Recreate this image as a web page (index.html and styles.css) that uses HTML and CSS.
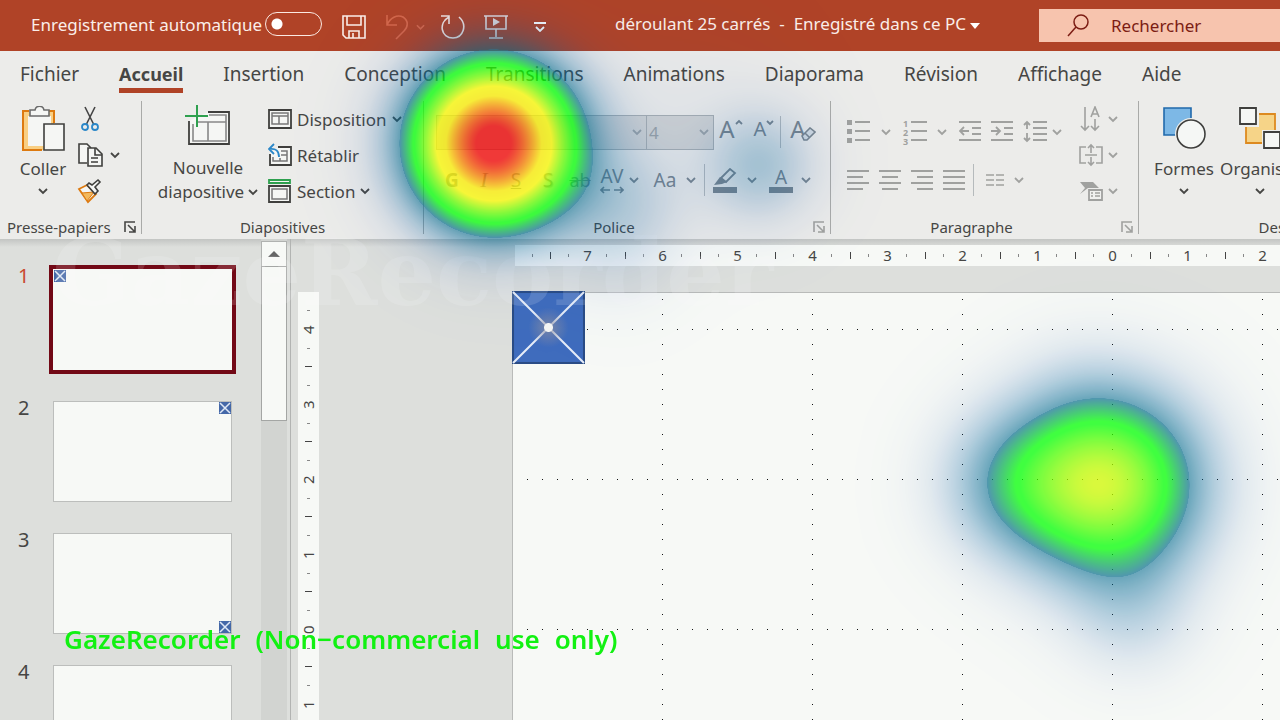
FILE: index.html
```html
<!DOCTYPE html>
<html lang="fr">
<head>
<meta charset="utf-8">
<title>déroulant 25 carrés</title>
<link rel="stylesheet" href="styles.css">
</head>
<body>
<svg class="defs" aria-hidden="true">
  <symbol id="chev" viewBox="0 0 10 8"><path d="M1 2l4 4 4-4" fill="none" stroke="currentColor" stroke-width="1.8"/></symbol>
  <symbol id="launch" viewBox="0 0 14 14"><path d="M2 12V2h10M5 5l7 7M12 6v6H6" fill="none" stroke="currentColor" stroke-width="1.6"/></symbol>
  <symbol id="cross" viewBox="0 0 72 72"><rect x="1" y="1" width="70" height="70" fill="#3f6cbd" stroke="#2a4c85" stroke-width="2"/><path d="M1 1l70 70M71 1L1 71" stroke="#e6edf8" stroke-width="2"/></symbol>
  <symbol id="minicross" viewBox="0 0 12 12"><rect width="12" height="12" fill="#4468a8"/><path d="M1 1l10 10M11 1L1 11" stroke="#dfe8f6" stroke-width="1.5"/></symbol>
</svg>
<div class="app">
  <header class="titlebar">
    <label class="autosave" for="autosave">Enregistrement automatique</label>
    <input class="toggle" id="autosave" type="checkbox">
    <button class="tool save" aria-label="Enregistrer"><svg width="26" height="26" viewBox="0 0 26 26"><path d="M2 2h22v22H5l-3-3zM6 2v9h14V2M8 24v-7h10v7M12 19v5" fill="none" stroke="#fbeee9" stroke-width="1.6"/></svg></button>
    <button class="tool undo" aria-label="Annuler"><svg width="24" height="26" viewBox="0 0 24 26"><path d="M2 1v10h10M2 11C5 4 12 0 18 3c6 4 5 10 1 14l-8 8" fill="none" stroke="currentColor" stroke-width="1.6"/></svg><svg width="9" height="8"><use href="#chev"/></svg></button>
    <button class="tool redo" aria-label="Rétablir"><svg width="26" height="26" viewBox="0 0 26 26"><path d="M19 3c9 8 4 21-6 21C1 24-2 9 9 3M1 2h8v8" fill="none" stroke="#f7e5de" stroke-width="1.6"/></svg></button>
    <button class="tool show" aria-label="Diaporama"><svg width="24" height="26" viewBox="0 0 24 26"><path d="M0 2h24M2 2v13h20V2M12 15v8M5 24h14" fill="none" stroke="#e9dcda" stroke-width="1.6"/><path d="M9 4l7 4-7 4z" fill="#e9dcda"/></svg></button>
    <button class="tool more" aria-label="Personnaliser"><svg width="12" height="10" viewBox="0 0 12 10"><path d="M0 1h12M2 5l4 4 4-4" fill="none" stroke="#fff" stroke-width="1.8"/></svg></button>
    <h1 class="doc">déroulant 25 carrés&nbsp; -&nbsp; Enregistré dans ce PC</h1>
    <svg class="doc-arrow" width="10" height="6"><path d="M0 0h10L5 6z" fill="#fff"/></svg>
    <label class="search"><svg width="22" height="24" viewBox="0 0 22 24"><circle cx="14" cy="8" r="7" fill="none" stroke="#7c1d14" stroke-width="1.5"/><path d="M9 13l-8 9" stroke="#7c1d14" stroke-width="1.5"/></svg><input type="text" placeholder="Rechercher" aria-label="Rechercher"></label>
  </header>

  <nav class="tabs">
    <a href="#">Fichier</a><a href="#" class="active">Accueil</a><a href="#">Insertion</a><a href="#">Conception</a><a href="#">Transitions</a><a href="#">Animations</a><a href="#">Diaporama</a><a href="#">Révision</a><a href="#">Affichage</a><a href="#">Aide</a>
  </nav>

  <section class="ribbon">
    <div class="group clipboard">
      <div class="body">
        <button class="big paste"><svg width="44" height="46" viewBox="0 0 44 46"><path d="M3 6h30v38H3z" fill="#f9cf83"/><path d="M7 10h23v30H7z" fill="#f5f6f4"/><path d="M8 5H2v39h19M27 5h6v12" fill="none" stroke="#dd7a10" stroke-width="2"/><path d="M9 10V4h5c1-5 8-5 9 0h5v6z" fill="#f5f6f4" stroke="#6b6b6b" stroke-width="1.6"/><path d="M23 18h20v26H23z" fill="#f5f6f4" stroke="#3f3f3d" stroke-width="1.6"/></svg><span>Coller</span><svg width="10" height="8"><use href="#chev"/></svg></button>
        <div class="stack">
          <button aria-label="Couper"><svg width="18" height="26" viewBox="0 0 18 26"><path d="M4 1l9 18M14 1L5 19" stroke="#444" stroke-width="1.6"/><circle cx="4" cy="21" r="3" fill="none" stroke="#2b87c8" stroke-width="1.8"/><circle cx="14" cy="21" r="3" fill="none" stroke="#2b87c8" stroke-width="1.8"/></svg></button>
          <button aria-label="Copier" class="copy"><svg width="26" height="26" viewBox="0 0 26 26"><path d="M10 21H2V2h8l4 4" fill="#f5f6f4" stroke="#3f3f3d" stroke-width="1.6"/><path d="M11 6h8l6 6v12H11z" fill="#f5f6f4" stroke="#3f3f3d" stroke-width="1.6"/><path d="M18 6v7h7M14 16h7M14 20h7" fill="none" stroke="#3f3f3d" stroke-width="1.6"/></svg><svg width="10" height="8"><use href="#chev"/></svg></button>
          <button aria-label="Reproduire la mise en forme"><svg width="26" height="26" viewBox="0 0 26 26"><path d="M2 11l8-4 9 9-8 8z" fill="#f5f6f4" stroke="#dd7a10" stroke-width="1.8"/><path d="M5 15l12-1-7 9z" fill="#f3b95e" stroke="#dd7a10"/><path d="M10 7l8 9 3-3-3-4 5-5-2-2-6 5-3-2z" fill="#f5f6f4" stroke="#3f3f3d" stroke-width="1.6"/></svg></button>
        </div>
      </div>
      <div class="foot"><span>Presse-papiers</span><button aria-label="Options presse-papiers"><svg width="14" height="14"><use href="#launch"/></svg></button></div>
    </div>

    <div class="group slides">
      <div class="body">
        <button class="big newslide"><svg width="46" height="44" viewBox="0 0 46 44"><path d="M4 17v23h40V8H23" fill="#f5f6f4"/><path d="M4 17v23h40V8H23" fill="none" stroke="#3f3f3d" stroke-width="1.8"/><path d="M8 20v17h33V11H24M24 18h17M23 18v19M12 18h12" fill="none" stroke="#888" stroke-width="1.6"/><path d="M12 1v22M0 12h23" stroke="#2ea04e" stroke-width="2"/></svg><span>Nouvelle</span><span class="with-chev">diapositive<svg width="10" height="8"><use href="#chev"/></svg></span></button>
        <div class="stack text">
          <button><svg width="24" height="20" viewBox="0 0 24 20"><path d="M1 1h22v18H1z" fill="#f5f6f4" stroke="#3f3f3d" stroke-width="1.8"/><path d="M4 4h16v11H4zM4 7h16M11 7v8" fill="none" stroke="#777" stroke-width="1.5"/></svg>Disposition<svg width="10" height="8"><use href="#chev"/></svg></button>
          <button><svg width="24" height="24" viewBox="0 0 24 24"><path d="M2 11v11h21V4H10" fill="#f5f6f4" stroke="#3f3f3d" stroke-width="1.8"/><path d="M5 14v4h14V8h-6M13 12h6M12 15v3" fill="none" stroke="#777" stroke-width="1.5"/><path d="M6 1L1 6l5 5M1 6c7-1 10 2 10 8" fill="none" stroke="#2b87c8" stroke-width="1.8"/></svg>Rétablir</button>
          <button><svg width="24" height="24" viewBox="0 0 24 24"><path d="M1 1h21v3H1z" fill="#f5f6f4" stroke="#2ea04e" stroke-width="1.8"/><path d="M1 7h21v16H1z" fill="#f5f6f4" stroke="#3f3f3d" stroke-width="1.8"/><path d="M4 10h15v10H4z" fill="none" stroke="#777" stroke-width="1.5"/></svg>Section<svg width="10" height="8"><use href="#chev"/></svg></button>
        </div>
      </div>
      <div class="foot"><span>Diapositives</span></div>
    </div>

    <div class="group font off">
      <div class="rows">
        <div class="row">
          <span class="combo name"><select aria-label="Police"><option></option></select><svg width="10" height="8"><use href="#chev"/></svg></span>
          <span class="combo size"><select aria-label="Taille"><option>4</option></select><svg width="10" height="8"><use href="#chev"/></svg></span>
          <button class="grow" aria-label="Agrandir">A<svg width="8" height="7" viewBox="0 0 8 7"><path d="M1 5l3-3 3 3" fill="none" stroke="currentColor" stroke-width="1.8"/></svg></button>
          <button class="shrink" aria-label="Réduire">A<svg width="8" height="7" viewBox="0 0 8 7"><path d="M1 2l3 3 3-3" fill="none" stroke="currentColor" stroke-width="1.8"/></svg></button>
          <i class="sep"></i>
          <button class="erase" aria-label="Effacer">A<svg width="15" height="15" viewBox="0 0 15 15"><path d="M1 9l8-8 5 4-8 8H3zM4 6l5 5" fill="#d5dde2" stroke="currentColor" stroke-width="1.6"/></svg></button>
        </div>
        <div class="row">
          <button class="ch"><b>G</b></button><button class="ch it">I</button><button class="ch un">S</button><button class="ch sh">S</button><button class="ch st">ab</button>
          <button class="ch av">AV<svg width="24" height="8" viewBox="0 0 24 8"><path d="M4 1L1 4l3 3M1 4h9M20 1l3 3-3 3M23 4h-9" fill="none" stroke="currentColor" stroke-width="1.6"/></svg></button><svg class="c" width="10" height="8"><use href="#chev"/></svg>
          <button class="ch aa">Aa</button><svg class="c" width="10" height="8"><use href="#chev"/></svg>
          <i class="sep"></i>
          <button class="ch pen" aria-label="Surlignage"><svg width="24" height="25" viewBox="0 0 24 25"><path d="M8 10l9-9 5 4-9 9z" fill="none" stroke="currentColor" stroke-width="1.8"/><path d="M7 9l-6 8 8-1 5-2z" fill="currentColor"/><path d="M0 19h24v6H0z" fill="currentColor"/></svg></button><svg class="c" width="10" height="8"><use href="#chev"/></svg>
          <button class="ch color">A<svg width="24" height="6"><path d="M0 0h24v6H0z" fill="currentColor"/></svg></button><svg class="c" width="10" height="8"><use href="#chev"/></svg>
        </div>
      </div>
      <div class="foot"><span>Police</span><button aria-label="Options police"><svg width="14" height="14"><use href="#launch"/></svg></button></div>
    </div>

    <div class="group para off">
      <div class="body">
        <div class="rows">
          <div class="row">
            <button class="ic" aria-label="Puces"><svg width="24" height="24" viewBox="0 0 24 24"><path d="M0 0h5v5H0zM0 9h5v5H0zM0 18h5v5H0z" fill="currentColor"/><path d="M8 2h15M8 11h15M8 20h15" stroke="currentColor" stroke-width="1.8"/></svg></button><svg class="c wide" width="10" height="8"><use href="#chev"/></svg>
            <button class="ic num" aria-label="Numérotation"><span>1<br>2<br>3</span><svg width="16" height="24" viewBox="0 0 16 24"><path d="M0 2h16M0 11h16M0 20h16" stroke="currentColor" stroke-width="1.8"/></svg></button><svg class="c wide" width="10" height="8"><use href="#chev"/></svg>
            <button class="ic gap" aria-label="Diminuer le retrait"><svg width="22" height="24" viewBox="0 0 22 24"><path d="M0 2h22M13 8h9M13 14h9M0 20h22M5 7l-4 4 4 4M1 11h9" fill="none" stroke="currentColor" stroke-width="1.8"/></svg></button>
            <button class="ic gap" aria-label="Augmenter le retrait"><svg width="22" height="24" viewBox="0 0 22 24"><path d="M0 2h22M13 8h9M13 14h9M0 20h22M5 7l4 4-4 4M0 11h9" fill="none" stroke="currentColor" stroke-width="1.8"/></svg></button>
            <button class="ic" aria-label="Interligne"><svg width="24" height="24" viewBox="0 0 24 24"><path d="M10 2h14M10 8h14M10 14h14M10 20h14M4 2v7M1 5l3-3 3 3M4 13v8M1 18l3 3 3-3" fill="none" stroke="currentColor" stroke-width="1.8"/></svg></button><svg class="c" width="10" height="8"><use href="#chev"/></svg>
          </div>
          <div class="row">
            <button class="ic gap" aria-label="Gauche"><svg width="22" height="22" viewBox="0 0 22 22"><path d="M0 2h22M0 8h16M0 14h22M0 20h16" stroke="currentColor" stroke-width="1.8"/></svg></button>
            <button class="ic gap" aria-label="Centrer"><svg width="22" height="22" viewBox="0 0 22 22"><path d="M0 2h22M3 8h16M0 14h22M3 20h16" stroke="currentColor" stroke-width="1.8"/></svg></button>
            <button class="ic gap" aria-label="Droite"><svg width="22" height="22" viewBox="0 0 22 22"><path d="M0 2h22M6 8h16M0 14h22M6 20h16" stroke="currentColor" stroke-width="1.8"/></svg></button>
            <button class="ic" aria-label="Justifier"><svg width="22" height="22" viewBox="0 0 22 22"><path d="M0 2h22M0 8h22M0 14h22M0 20h22" stroke="currentColor" stroke-width="1.8"/></svg></button>
            <i class="sep"></i>
            <button class="ic" aria-label="Colonnes"><svg width="18" height="14" viewBox="0 0 18 14"><path d="M0 2h8M0 7h8M0 12h8M10 2h8M10 7h8M10 12h8" stroke="currentColor" stroke-width="1.6"/></svg></button><svg class="c wide" width="10" height="8"><use href="#chev"/></svg>
          </div>
        </div>
        <div class="stack pick">
          <button class="sort" aria-label="Orientation du texte"><svg width="24" height="26" viewBox="0 0 24 26"><path d="M6 1v22M2 20l4 4 4-4M16 13v10M12 20l4 4 4-4M12 11l4-10 4 10M13 8h6" fill="none" stroke="currentColor" stroke-width="1.6"/></svg><svg width="10" height="8"><use href="#chev"/></svg></button>
          <button aria-label="Aligner le texte"><svg width="24" height="24" viewBox="0 0 24 24"><path d="M7 4H1v16h6M17 4h6v16h-6M6 12h12M12 2v8M9 5l3-3 3 3M12 14v8M9 19l3 3 3-3" fill="none" stroke="currentColor" stroke-width="1.6"/></svg><svg width="10" height="8"><use href="#chev"/></svg></button>
          <button aria-label="SmartArt"><svg width="24" height="20" viewBox="0 0 24 20"><path d="M1 1h13l6 6H9L1 13l5-6z" fill="currentColor"/><path d="M10 9h13v10H10z" fill="#f0f1ef" stroke="currentColor" stroke-width="1.8"/><path d="M12 12h2M16 12h5M12 15h2M16 15h5" stroke="currentColor" stroke-width="1.5"/></svg><svg width="10" height="8"><use href="#chev"/></svg></button>
        </div>
      </div>
      <div class="foot"><span>Paragraphe</span><button aria-label="Options paragraphe"><svg width="14" height="14"><use href="#launch"/></svg></button></div>
    </div>

    <div class="group draw">
      <div class="body">
        <button class="big"><svg width="44" height="46" viewBox="0 0 44 46"><path d="M2 2h27v27H2z" fill="#7db8e6" stroke="#2169ac" stroke-width="1.6"/><circle cx="29" cy="28" r="16" fill="#eeefed"/><circle cx="29" cy="28" r="14" fill="#f5f7f5" stroke="#3f3f3d" stroke-width="1.6"/></svg><span>Formes</span><svg width="10" height="8"><use href="#chev"/></svg></button>
        <button class="big"><svg width="44" height="46" viewBox="0 0 44 46"><path d="M8 8h29v29H8z" fill="#f6d488" stroke="#dd8a20" stroke-width="1.8"/><path d="M0 0h21v21H0zM24 24h20v20H24z" fill="#eeefed"/><path d="M2 2h16v16H2zM26 26h16v16H26z" fill="#f5f7f5" stroke="#3f3f3d" stroke-width="1.8"/></svg><span>Organiser</span><svg width="10" height="8"><use href="#chev"/></svg></button>
      </div>
      <div class="foot"><span>Dessin</span></div>
    </div>
  </section>

  <main class="work">
    <aside class="panel">
      <ol class="thumbs">
        <li class="current"><span>1</span><div class="thumb tl"><svg width="12" height="12"><use href="#minicross"/></svg></div></li>
        <li><span>2</span><div class="thumb tr"><svg width="12" height="12"><use href="#minicross"/></svg></div></li>
        <li><span>3</span><div class="thumb br"><svg width="12" height="12"><use href="#minicross"/></svg></div></li>
        <li><span>4</span><div class="thumb"></div></li>
      </ol>
      <div class="scroll"><button aria-label="Haut"><svg width="12" height="6"><path d="M0 6h12L6 0z" fill="#666"/></svg></button><div class="knob"></div></div>
    </aside>
    <section class="editor">
      <div class="ruler-h"><i></i><span>7</span><span>6</span><span>5</span><span>4</span><span>3</span><span>2</span><span>1</span><span>0</span><span>1</span><span>2</span></div>
      <div class="ruler-v"><span>4</span><span>3</span><span>2</span><span>1</span><span>0</span><span>1</span></div>
      <div class="slide">
        <svg class="grid" width="100%" height="100%"><defs><pattern id="gh" width="15" height="150" patternUnits="userSpaceOnUse"><rect x="14" y="36" width="1" height="1" fill="#111"/></pattern><pattern id="gv" width="150" height="15" patternUnits="userSpaceOnUse"><rect x="149" y="6" width="1" height="1" fill="#111"/></pattern></defs><rect width="100%" height="100%" fill="url(#gh)"/><rect width="100%" height="100%" fill="url(#gv)"/></svg>
        <div class="square"><svg width="73" height="73"><use href="#cross"/></svg></div>
      </div>
    </section>
  </main>
</div>
<div class="brand">GazeRecorder</div>
<canvas class="heat" id="heat"></canvas>
<p class="notice"><span>GazeRecorder</span><span>(Non−commercial</span><span>use</span><span>only)</span></p>
<script src="heat.js"></script>
</body>
</html>
```
FILE: styles.css
```css
* { box-sizing: border-box; }
body { margin: 0; overflow: hidden; font-family: "Noto Sans", "Open Sans", sans-serif; color: #464644; background: #dddfdc; }
button { display: flex; align-items: center; justify-content: center; padding: 0; border: 0; background: none; color: inherit; font: inherit; }
svg { display: block; flex: none; }
.defs { position: absolute; width: 0; height: 0; }
.app { display: flex; flex-direction: column; height: 100vh; overflow: hidden; }

.titlebar { display: flex; align-items: center; flex: none; height: 51px; padding-left: 31px; background: #b04327; color: #fbeee9; font-size: 17px; white-space: nowrap; }
.titlebar > * { flex: none; }
.autosave { width: 234px; padding-bottom: 2px; }
.toggle { appearance: none; width: 57px; height: 24px; margin: 0 19px 3px 0; border: 1px solid #fbe9e2; border-radius: 12px; background: radial-gradient(circle at 11px 11px, #fff 5px, transparent 6px); }
.tool { margin-top: 2px; }
.undo { width: 40px; margin-left: 18px; justify-content: space-between; color: #d5674a; }
.redo { margin-left: 15px; }
.show { margin-left: 18px; }
.more { margin-left: 26px; }
.doc { margin: 0 4px 4px 69px; font-size: 17px; font-weight: 400; }
.titlebar .search { display: flex; align-items: center; flex: 0 1 241px; min-width: 0; height: 33px; margin-left: auto; padding-left: 28px; gap: 22px; background: #f7c4ae; }
.search input { flex: 1; width: 0; min-width: 0; padding: 0; border: 0; background: none; font: inherit; color: #7c1d14; }
.search input::placeholder { color: #7c1d14; opacity: 1; }

.tabs { display: flex; flex: none; height: 47px; padding: 8px 0 0 20px; gap: 40px; background: #ececea; font-size: 19px; }
.tabs a { height: 34px; line-height: 30px; color: inherit; text-decoration: none; }
.tabs .active { font-size: 18px; font-weight: 700; border-bottom: 5px solid #b04327; }

.ribbon { display: flex; flex: none; height: 141px; padding-top: 3px; background: #ececea; font-size: 17px; white-space: nowrap; overflow: hidden; }
.group { display: flex; flex-direction: column; flex: none; height: 133px; border-right: 1px solid #a9aaa8; }
.clipboard { width: 142px; }
.slides { width: 282px; }
.font { width: 407px; }
.para { width: 308px; }
.draw { border: 0; width: 260px; }
.body { display: flex; height: 112px; }
.foot { display: flex; align-items: center; justify-content: center; height: 14px; margin-top: auto; font-size: 15px; line-height: 14px; }
.clipboard .foot { justify-content: space-between; padding: 0 4px 0 7px; }
.font .foot, .para .foot { padding-right: 4px; }
.font .foot span, .para .foot span { flex: 1; text-align: center; color: #464644; }
.font .foot button, .para .foot button { margin-left: 8px; }
.big { flex-direction: column; justify-content: flex-start; padding-top: 5px; }
.big span { line-height: 24px; height: 24px; margin-bottom: 6px; }
.big > svg:first-child { margin-bottom: 5px; }
.paste { width: 86px; }
.stack { display: flex; flex-direction: column; }
.stack button { height: 36px; justify-content: flex-start; }
.clipboard .stack { margin-left: -9px; }
.clipboard .stack button { gap: 7px; }
.clipboard .stack button:first-child { padding-left: 4px; }
.newslide { width: 125px; padding-left: 7px; padding-top: 3px; }
.newslide span { margin: 0; }
.newslide > svg:first-child { margin-bottom: 8px; }
.with-chev { display: flex; align-items: center; gap: 4px; }
.stack.text { margin-left: 1px; }
.stack.text button { gap: 5px; }

.off { color: #a0a19f; }
.rows { display: flex; flex-direction: column; padding-top: 7px; }
.row { display: flex; align-items: center; height: 48px; }
.font .rows { padding-left: 12px; }
.font .row { color: #7b868e; }
.combo { position: relative; display: flex; align-items: center; height: 35px; border: 1px solid #a9afb2; background: #c4c8c9aa; color: #9ba3a8; }
.combo select { appearance: none; width: 100%; height: 100%; padding: 0 2px; border: 0; background: none; color: inherit; font: inherit; }
.combo svg { position: absolute; right: 4px; }
.combo.name { width: 211px; }
.combo.size { width: 68px; margin-left: -1px; }
.row .sep { width: 1px; height: 32px; background: #b5babc; }
.grow, .shrink, .erase { align-items: flex-start; padding-bottom: 6px; line-height: 28px; }
.grow { width: 34px; font-size: 24px; }
.shrink { width: 32px; font-size: 20px; }
.erase { width: 44px; font-size: 24px; }
.grow svg, .shrink svg { margin-top: 4px; }
.erase svg { margin: 12px 0 0 -5px; }
.ch { width: 32px; height: 32px; font-size: 19px; }
.it { font-family: "Liberation Serif", serif; font-style: italic; font-size: 22px; }
.un { text-decoration: underline; }
.sh { text-shadow: 1px 1px 1px #7b868e88; }
.st { text-decoration: line-through; font-size: 18px; }
.av, .color { flex-direction: column; line-height: 20px; }
.aa { width: 34px; margin-left: 9px; }
.font .row .c { margin-left: 1px; }
.font .row .aa + .c { margin-left: 4px; }
.font .row .c + .sep { margin-left: 8px; }
.pen { width: 40px; }
.color { width: 36px; margin-left: 6px; }
.font .row .pen + .c, .font .row .color + .c { margin-left: 2px; }
.para .row { color: #a0a19f; }
.para .rows { width: 232px; padding-left: 16px; }
.para .row .c.wide { margin: 0 12px 0 10px; }
.para .row .c { margin-left: 5px; }
.gap { margin-right: 10px; }
.num { width: 24px; gap: 3px; font-size: 9px; line-height: 9px; font-weight: 700; }
.para .sep { margin: 0 12px 0 8px; }
.pick { padding-left: 16px; }
.pick button { gap: 5px; }

.draw .body { padding-left: 10px; }
.draw .big { width: 70px; }
.draw .big + .big { width: 82px; }
.draw .foot { width: 286px; }

.work { display: flex; flex: 1; min-height: 0; background: linear-gradient(#c3c5c3, #dddfdc 8px); }
.panel { display: flex; flex: none; width: 291px; border-right: 1px solid #b2b4b2; overflow: hidden; }
.thumbs { display: flex; flex-direction: column; gap: 31px; width: 261px; margin: 0; padding: 30px 0 0 18px; list-style: none; font-size: 20px; }
.thumbs li { display: flex; flex: none; height: 101px; }
.thumbs span { width: 35px; line-height: 14px; }
.current span { color: #c9492e; }
.thumb { display: flex; width: 179px; height: 101px; border: 1px solid #bcbebc; background: #f7f9f6; }
.current .thumb { border-color: #f7f9f6; outline: 4px solid #720916; }
.tr, .br { justify-content: flex-end; }
.br { align-items: flex-end; }
.scroll { display: flex; flex-direction: column; width: 26px; padding-top: 2px; background: #d2d4d1; }
.scroll button { height: 26px; border: 1px solid #b0b2b0; background: #f7f9f6; }
.knob { height: 155px; margin-top: -1px; border: 1px solid #a4a6a4; background: #f7f9f6; }
.editor { display: grid; flex: 1; min-width: 0; grid-template: 21px 1fr / 21px 1fr; gap: 26px 193px; padding: 6px 0 0 7px; overflow: hidden; font-size: 15px; }
.ruler-h { display: flex; grid-column: 2; margin-left: 3px; background: #f7f9f6; overflow: hidden; }
.ruler-h i, .ruler-h span { flex: none; width: 75px; line-height: 21px; text-align: center; background: linear-gradient(#444, #444) 0 7px / 1px 7px no-repeat, linear-gradient(#888, #888) 18px 9px / 1px 3px no-repeat, linear-gradient(#888, #888) 56px 9px / 1px 3px no-repeat; }
.ruler-h i { width: 35px; background: linear-gradient(#888, #888) 17px 9px / 1px 3px no-repeat; }
.ruler-v { display: flex; flex-direction: column; grid-column: 1; background: #f7f9f6; overflow: hidden; }
.ruler-v span { flex: none; height: 75px; line-height: 21px; text-align: center; writing-mode: vertical-rl; transform: rotate(180deg); background: linear-gradient(#444, #444) 7px 0 / 7px 1px no-repeat, linear-gradient(#888, #888) 9px 18px / 3px 1px no-repeat, linear-gradient(#888, #888) 9px 56px / 3px 1px no-repeat; }
.slide { position: relative; display: flex; align-items: flex-start; border: 1px solid #b9bbb9; border-width: 1px 0 0 1px; background: #f7f9f6; }
.grid { position: absolute; inset: 0; }
.square { position: relative; margin: -2px 0 0 -1px; }
.square::after { content: ""; position: absolute; inset: 0; background: radial-gradient(circle, #f5f5f4 4px, #8f8fa088 5px, #8f8fa000 20px); }

.brand { position: absolute; top: 220px; left: 52px; font: 700 92px/106px "DejaVu Serif", serif; color: #fff; opacity: .14; }
.heat { position: absolute; inset: 0; width: 100vw; height: 100vh; pointer-events: none; }
.notice { position: absolute; top: 621px; left: 64px; display: flex; gap: 15px; margin: 0; font-size: 26px; font-weight: 600; line-height: 36px; color: #12f112; white-space: nowrap; }
```
FILE: heat.js
```js
// Gaze fixations: x, y, radius, weight
const points = [
  [493, 143, 54, 1],
  [625, 198, 42, 0.06], [615, 245, 45, 0.04], [760, 165, 40, 0.12], [680, 120, 75, 0.02],
  [1108, 484, 63, 0.5], [1012, 482, 50, 0.16], [1132, 612, 45, 0.07], [1075, 395, 45, 0.02]
];
// Level, red, green, blue, opacity
const ramp = [
  [0, 30, 80, 180, 0], [0.05, 10, 80, 170, 0.09], [0.12, 0, 95, 158, 0.27], [0.219, 0, 105, 142, 0.57],
  [0.22, 22, 116, 148, 0.74], [0.33, 0, 255, 0, 0.74], [0.345, 0, 255, 0, 0.74],
  [0.57, 248, 248, 0, 0.76], [0.68, 250, 235, 0, 0.76], [0.95, 240, 0, 0, 0.76], [2, 240, 0, 0, 0.76]
];
const canvas = document.getElementById("heat");
const w = canvas.width = window.innerWidth;
const h = canvas.height = window.innerHeight;
const ctx = canvas.getContext("2d");
const img = ctx.createImageData(w, h);
for (let y = 0, i = 0; y < h; y++) {
  for (let x = 0; x < w; x++, i += 4) {
    let v = 0;
    for (const [px, py, s, k] of points) {
      const d = ((x - px) ** 2 + (y - py) ** 2) / (2 * s * s);
      if (d < 8) v += k * Math.exp(-d);
    }
    let n = 1;
    while (v > ramp[n][0]) n++;
    const a = ramp[n - 1], b = ramp[n];
    const t = (v - a[0]) / (b[0] - a[0]);
    for (let c = 0; c < 3; c++) img.data[i + c] = a[c + 1] + (b[c + 1] - a[c + 1]) * t;
    img.data[i + 3] = 255 * (a[4] + (b[4] - a[4]) * t);
  }
}
ctx.putImageData(img, 0, 0);
```
